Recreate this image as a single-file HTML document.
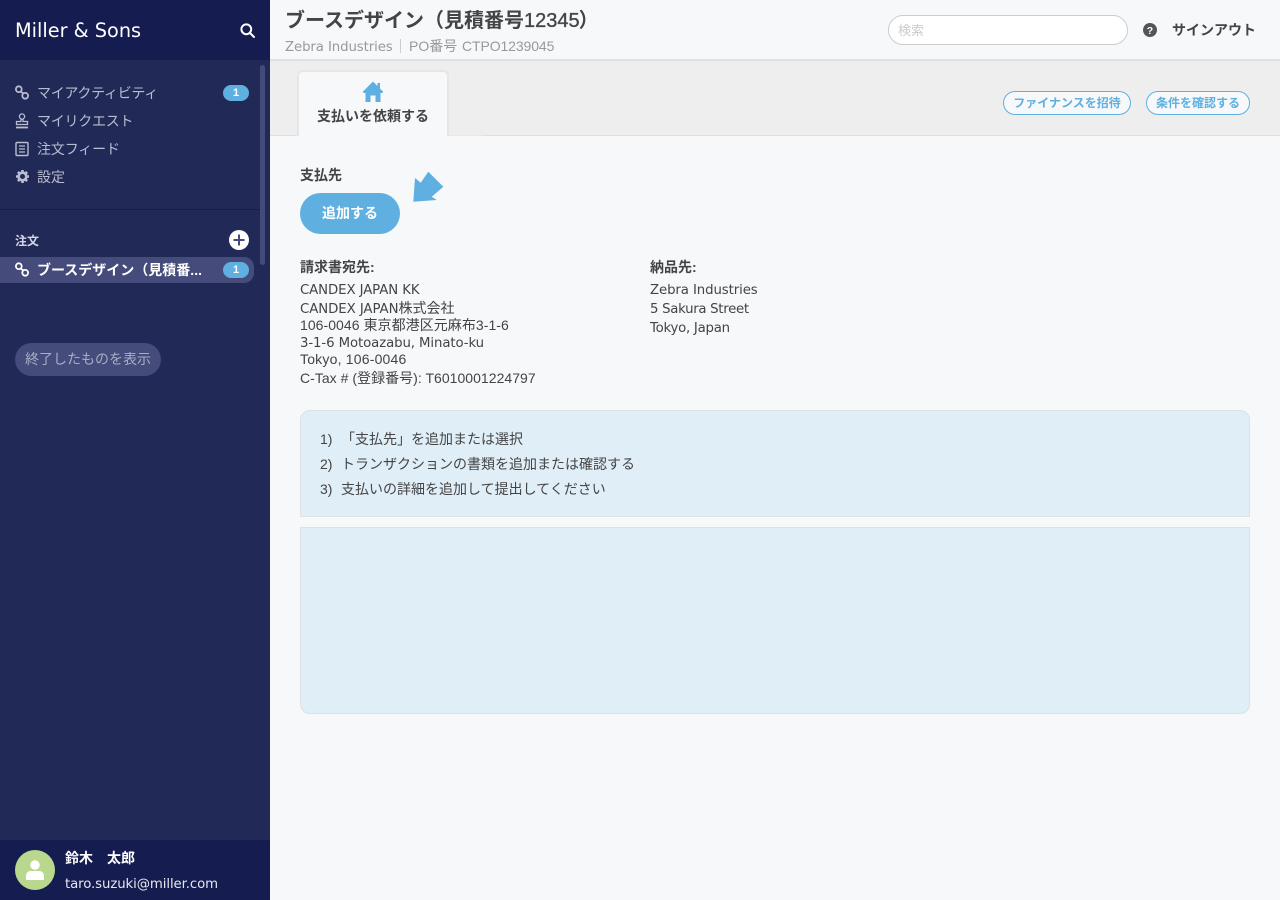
<!DOCTYPE html>
<html lang="ja"><head><meta charset="utf-8"><title>ブースデザイン</title>
<style>
*{box-sizing:border-box}
html,body{margin:0;padding:0;width:1280px;height:900px;overflow:hidden;background:#f6f8fa}
body{font-family:"Liberation Sans","Noto Sans CJK JP",sans-serif;color:#444;position:relative}
.a{position:absolute;white-space:nowrap}
.d{font-family:"DejaVu Sans","Noto Sans CJK JP",sans-serif;font-size:13.3px}
.nav{font-size:14px;color:#b9bdd2;line-height:20px;left:37px}
.ic{position:absolute;left:15px}
.badge{position:absolute;left:223px;width:26px;height:16px;border-radius:8px;background:#5fb0e0;color:#fff;font-size:11px;font-weight:bold;text-align:center;line-height:16px}
.l{font-size:14px;line-height:18px;left:300px}
.r{font-size:14px;line-height:19px;left:650px}
.lnk{position:absolute;top:91px;height:24px;border:1px solid #5fb0e0;border-radius:12px;color:#5fb0e0;font-size:12px;font-weight:bold;text-align:center;line-height:23px;background:#f6f8fa;white-space:nowrap}
</style></head><body>

<div class="a" style="left:0;top:0;width:270px;height:900px;background:#212957"></div>
<div class="a" style="left:0;top:0;width:270px;height:60px;background:#141c50"></div>
<div class="a d" style="left:15px;top:17px;font-size:19.3px;line-height:28px;color:#fff">Miller &amp; Sons</div>
<svg class="a" style="left:240px;top:23px" width="15" height="15" viewBox="0 0 15 15" fill="none" stroke="#fff" stroke-width="2"><circle cx="6.300" cy="6.300" r="4.900"/><path d="M10 10L14 14" stroke-linecap="round"/></svg>
<div class="a" style="left:260px;top:65px;width:5px;height:200px;border-radius:3px;background:#444b78"></div>

<svg class="ic" style="top:85px" width="14" height="15" viewBox="0 0 14 15" fill="none" stroke="#b9bdd2" stroke-width="1.800"><circle cx="3.800" cy="4.200" r="2.900"/><circle cx="10.200" cy="10.800" r="2.900"/><path d="M5.500 6.500l3 2"/></svg>
<div class="a nav" style="top:83px;letter-spacing:-.3px">マイアクティビティ</div>
<div class="badge" style="top:85px">1</div>

<svg class="ic" style="top:113px" width="14" height="16" viewBox="0 0 14 16" fill="none" stroke="#b9bdd2" stroke-width="1.300"><circle cx="7" cy="3.500" r="2.600"/><path d="M6 6v2.500H1.500v3h11v-3H8V6"/><path d="M1 14.500h12" stroke-width="1.800"/></svg>
<div class="a nav" style="top:111px;letter-spacing:-.25px">マイリクエスト</div>

<svg class="ic" style="top:141px" width="14" height="16" viewBox="0 0 14 16" fill="none" stroke="#b9bdd2" stroke-width="1.400"><rect x="1" y="1.500" width="12" height="13" rx="1"/><path d="M4 5h6M4 8h6M4 11h6" stroke-width="1.200"/></svg>
<div class="a nav" style="top:139px;letter-spacing:-.15px">注文フィード</div>

<svg class="ic" style="top:169px" width="15" height="15" viewBox="0 0 15 15"><circle cx="7.500" cy="7.500" r="3.800" fill="none" stroke="#b9bdd2" stroke-width="2.600"/><path d="M7.500 1v3M7.500 11v3M1 7.500h3M11 7.500h3M2.900 2.900l2 2M10.100 10.100l2 2M2.900 12.100l2-2M10.100 4.900l2-2" stroke="#b9bdd2" stroke-width="2.600"/></svg>
<div class="a nav" style="top:167px">設定</div>

<div class="a" style="left:0;top:209px;width:260px;height:1px;background:#141c50"></div>
<div class="a" style="left:15px;top:232px;font-size:12px;line-height:18px;font-weight:bold;color:#d5d7e3">注文</div>
<svg class="a" style="left:229px;top:230px" width="20" height="20" viewBox="0 0 20 20"><circle cx="10" cy="10" r="10" fill="#fff"/><path d="M10 4.500v11M4.500 10h11" stroke="#444b78" stroke-width="2"/></svg>

<div class="a" style="left:0;top:257px;width:254px;height:26px;background:#454b7a;border-radius:0 10px 10px 0"></div>
<svg class="ic" style="top:262px" width="14" height="15" viewBox="0 0 14 15" fill="none" stroke="#fff" stroke-width="1.800"><circle cx="3.800" cy="4.200" r="2.900"/><circle cx="10.200" cy="10.800" r="2.900"/><path d="M5.500 6.500l3 2"/></svg>
<div class="a" style="left:37px;top:260px;font-size:14px;line-height:20px;font-weight:bold;color:#fff">ブースデザイン（見積番...</div>
<div class="badge" style="top:262px">1</div>

<div class="a" style="left:15px;top:343px;width:146px;height:33px;border-radius:17px;background:#454b7a;color:#a9adc6;font-size:14px;line-height:33px;text-align:center">終了したものを表示</div>

<div class="a" style="left:0;top:840px;width:270px;height:60px;background:#141c50"></div>
<div class="a" style="left:15px;top:850px;width:40px;height:40px;border-radius:50%;background:#bad88d"></div>
<svg class="a" style="left:26px;top:860px" width="18" height="20" viewBox="0 0 18 20" fill="#fff"><circle cx="9" cy="5" r="4.700"/><path d="M0 19v-3c0-3 2-5 5-5h8c3 0 5 2 5 5v3c0 .5-.5 1-1 1H1c-.500 0-1-.500-1-1z"/></svg>
<div class="a" style="left:65px;top:849px;font-size:14px;line-height:18px;font-weight:bold;color:#fff">鈴木　太郎</div>
<div class="a d" style="left:65px;top:876px;line-height:18px;color:#e6e7ee;letter-spacing:-.1px">taro.suzuki@miller.com</div>

<div class="a" style="left:270px;top:59px;width:1010px;height:2px;background:#dddfe1"></div>
<div class="a" style="left:285px;top:6px;font-size:20px;line-height:30px;font-weight:bold;color:#444">ブースデザイン（見積番号<span style="font-weight:normal;-webkit-text-stroke:.35px #444">12345</span><span style="margin-left:-1px">）</span></div>
<div class="a d" style="left:285px;top:38px;line-height:19px;color:#999;letter-spacing:-.1px">Zebra Industries</div>
<div class="a" style="left:400px;top:39px;width:1px;height:14px;background:#ccc"></div>
<div class="a" style="left:409px;top:37px;font-size:14px;line-height:19px;color:#999">PO番号</div>
<div class="a" style="left:462px;top:37px;font-size:14px;line-height:19px;color:#999;letter-spacing:-.1px">CTPO1239045</div>

<div class="a" style="left:888px;top:15px;width:240px;height:30px;border-radius:15px;background:#fff;border:1px solid #ccc;padding-left:9px;font-size:13px;line-height:29px;color:#ccc">検索</div>
<svg class="a" style="left:1143px;top:23px" width="14" height="14" viewBox="0 0 14 14"><circle cx="7" cy="7" r="7" fill="#555"/><text x="7" y="11" text-anchor="middle" font-size="10.500" font-weight="bold" fill="#fff" font-family="Liberation Sans">?</text></svg>
<div class="a" style="left:1172px;top:20px;font-size:14px;line-height:20px;font-weight:bold;color:#444;width:84px">サインアウト</div>

<div class="a" style="left:270px;top:61px;width:1010px;height:75px;background:#eeeeee;border-bottom:1px solid #dddfe1"></div>
<div class="a" style="left:448px;top:135px;width:34px;height:1px;background:#e8e8e8"></div>
<div class="a" style="left:297px;top:70px;width:152px;height:66px;background:#f6f8fa;border:2px solid #e6e6e6;border-bottom:0;border-radius:6px 6px 0 0"></div>
<svg class="a" style="left:362px;top:81px" width="22" height="21" viewBox="0 0 22 21" fill="#5fb0e0"><path d="M11 0.500L0.500 11 2 12h1.500V21H8.500V14.500h5V21h5V12H20l1.500-1L18 7.500V2h-2.500V5z"/></svg>
<div class="a" style="left:298px;top:106px;width:150px;text-align:center;font-size:14px;line-height:20px;font-weight:bold;color:#444">支払いを依頼する</div>
<div class="lnk" style="left:1003px;width:128px">ファイナンスを招待</div>
<div class="lnk" style="left:1146px;width:104px">条件を確認する</div>

<div class="a" style="left:300px;top:165px;font-size:14px;line-height:20px;font-weight:bold;color:#444">支払先</div>
<div class="a" style="left:300px;top:193px;width:100px;height:41px;border-radius:21px;background:#5fb0e0;color:#fff;font-size:14px;font-weight:bold;line-height:41px;text-align:center">追加する</div>
<svg class="a" style="left:412px;top:171px" width="32" height="32" viewBox="0 0 32 32" fill="#5fb0e0"><path d="M1.300 30.700L3 7 8.700 11.700 16.300 .7 31.300 15.700 19.700 25.700 24.700 29z"/></svg>

<div class="a" style="left:300px;top:257px;font-size:14px;line-height:20px;font-weight:bold;color:#444">請求書宛先:</div>
<div class="a l d" style="top:282px;font-size:13.3px;letter-spacing:-.1px">CANDEX JAPAN KK</div>
<div class="a l" style="top:299px"><span class="d" style="letter-spacing:-.07px">CANDEX JAPAN</span>株式会社</div>
<div class="a l" style="top:316px;letter-spacing:.05px">106-0046 東京都港区元麻布3-1-6</div>
<div class="a l d" style="top:335px;font-size:13.3px;letter-spacing:-.1px">3-1-6 Motoazabu, Minato-ku</div>
<div class="a l" style="top:350px;letter-spacing:.2px">Tokyo, 106-0046</div>
<div class="a l" style="top:369px;letter-spacing:.03px">C-Tax # (登録番号): T6010001224797</div>

<div class="a" style="left:650px;top:257px;font-size:14px;line-height:20px;font-weight:bold;color:#444">納品先:</div>
<div class="a r d" style="top:281px;font-size:13.3px;letter-spacing:-.1px">Zebra Industries</div>
<div class="a r d" style="top:300px;font-size:13.3px;letter-spacing:-.3px">5 Sakura Street</div>
<div class="a r d" style="top:319px;font-size:13.3px;letter-spacing:-.25px">Tokyo, Japan</div>

<div class="a" style="left:300px;top:410px;width:950px;height:107px;background:#e0eef7;border:1px solid #dbe1e5;border-radius:10px 10px 0 0"></div>
<div class="a" style="left:320px;top:429px;font-size:14px;line-height:20px">1)</div>
<div class="a" style="left:341px;top:429px;font-size:14px;line-height:20px">「支払先」を追加または選択</div>
<div class="a" style="left:320px;top:454px;font-size:14px;line-height:20px">2)</div>
<div class="a" style="left:341px;top:454px;font-size:14px;line-height:20px">トランザクションの書類を追加または確認する</div>
<div class="a" style="left:320px;top:479px;font-size:14px;line-height:20px">3)</div>
<div class="a" style="left:341px;top:479px;font-size:14px;line-height:20px">支払いの詳細を追加して提出してください</div>
<div class="a" style="left:300px;top:527px;width:950px;height:187px;background:#e0eef7;border:1px solid #dbe1e5;border-radius:0 0 10px 10px"></div>
</body></html>
